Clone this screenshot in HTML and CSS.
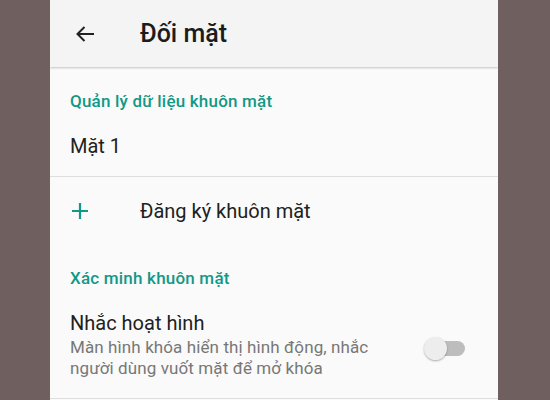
FILE: index.html
```html
<!DOCTYPE html>
<html lang="vi">
  <head>
    <meta charset="UTF-8" />
    <meta name="viewport" content="width=device-width, initial-scale=1.0" />
    <title>Đối mặt</title>
    <link rel="stylesheet" href="styles.css">
  </head>
  <body>
    <div class="screen">
      <div class="app-bar">
        <svg class="back" width="20" height="20" viewBox="0 0 20 20">
          <path d="M19 10H2.5M9.5 3 2.5 10l7 7" fill="none" stroke="#212121" stroke-width="2" />
        </svg>
        <h1>Đối mặt</h1>
      </div>

      <div class="category">Quản lý dữ liệu khuôn mặt</div>
      <div class="row first">Mặt 1</div>
      <div class="row add">
        <svg class="plus" width="18" height="18" viewBox="0 0 18 18">
          <path d="M9 1v16M1 9h16" fill="none" stroke="#129886" stroke-width="2.2" />
        </svg>
        <span>Đăng ký khuôn mặt</span>
      </div>

      <div class="category second">Xác minh khuôn mặt</div>
      <div class="row switch-row">
        <div class="texts">
          <div class="row-title">Nhắc hoạt hình</div>
          <div class="row-sub">Màn hình khóa hiển thị hình động, nhắc người dùng vuốt mặt để mở khóa</div>
        </div>
        <div class="switch"><div class="knob"></div></div>
      </div>
    </div>
  </body>
</html>
```

FILE: styles.css
```css
body {
  margin: 0;
  background-color: #705f5f;
  font-family: Roboto, "Noto Sans", sans-serif;
  color: #212121;
}
.screen {
  margin-left: 50px;
  width: 448px;
  height: 400px;
  background-color: #fafafa;
  overflow: hidden;
}
.app-bar {
  height: 67px;
  display: flex;
  align-items: center;
  padding-left: 25px;
  background-color: #f4f4f4;
  box-shadow: 0 1px 2px rgba(0, 0, 0, 0.22);
  position: relative;
}
.back {
  margin-right: 45px;
}
.app-bar h1 {
  margin: 0;
  font-size: 25px;
  font-weight: 500;
  color: #1c1c1c;
}
.category {
  padding: 24px 20px 6px;
  font-size: 17px;
  letter-spacing: 0.2px;
  line-height: 20px;
  font-weight: 500;
  color: #129886;
}
.category.second {
  padding-top: 23px;
  padding-bottom: 23px;
}
.row {
  display: flex;
  align-items: center;
  padding: 0 20px;
  font-size: 20px;
}
.row.first {
  height: 57px;
  padding-bottom: 2px;
  border-bottom: 1px solid #dedede;
}
.row.add {
  height: 68px;
  padding-left: 21px;
}
.plus {
  margin-right: 51px;
}
.switch-row {
  padding-right: 33px;
  padding-bottom: 19px;
  border-bottom: 1px solid #dedede;
  justify-content: space-between;
}
.row-title {
  font-size: 20px;
  line-height: 24px;
  margin-bottom: 2px;
}
.row-sub {
  width: 320px;
  font-size: 17px;
  letter-spacing: 0.1px;
  line-height: 21px;
  color: #777777;
}
.switch {
  width: 38px;
  height: 15px;
  border-radius: 8px;
  background-color: #bdbdbd;
  display: flex;
  align-items: center;
  margin-top: 6px;
}
.knob {
  width: 23px;
  height: 23px;
  border-radius: 50%;
  background-color: #ededed;
  box-shadow: 0 1px 2px rgba(0, 0, 0, 0.3);
  margin-left: -3px;
}
```
